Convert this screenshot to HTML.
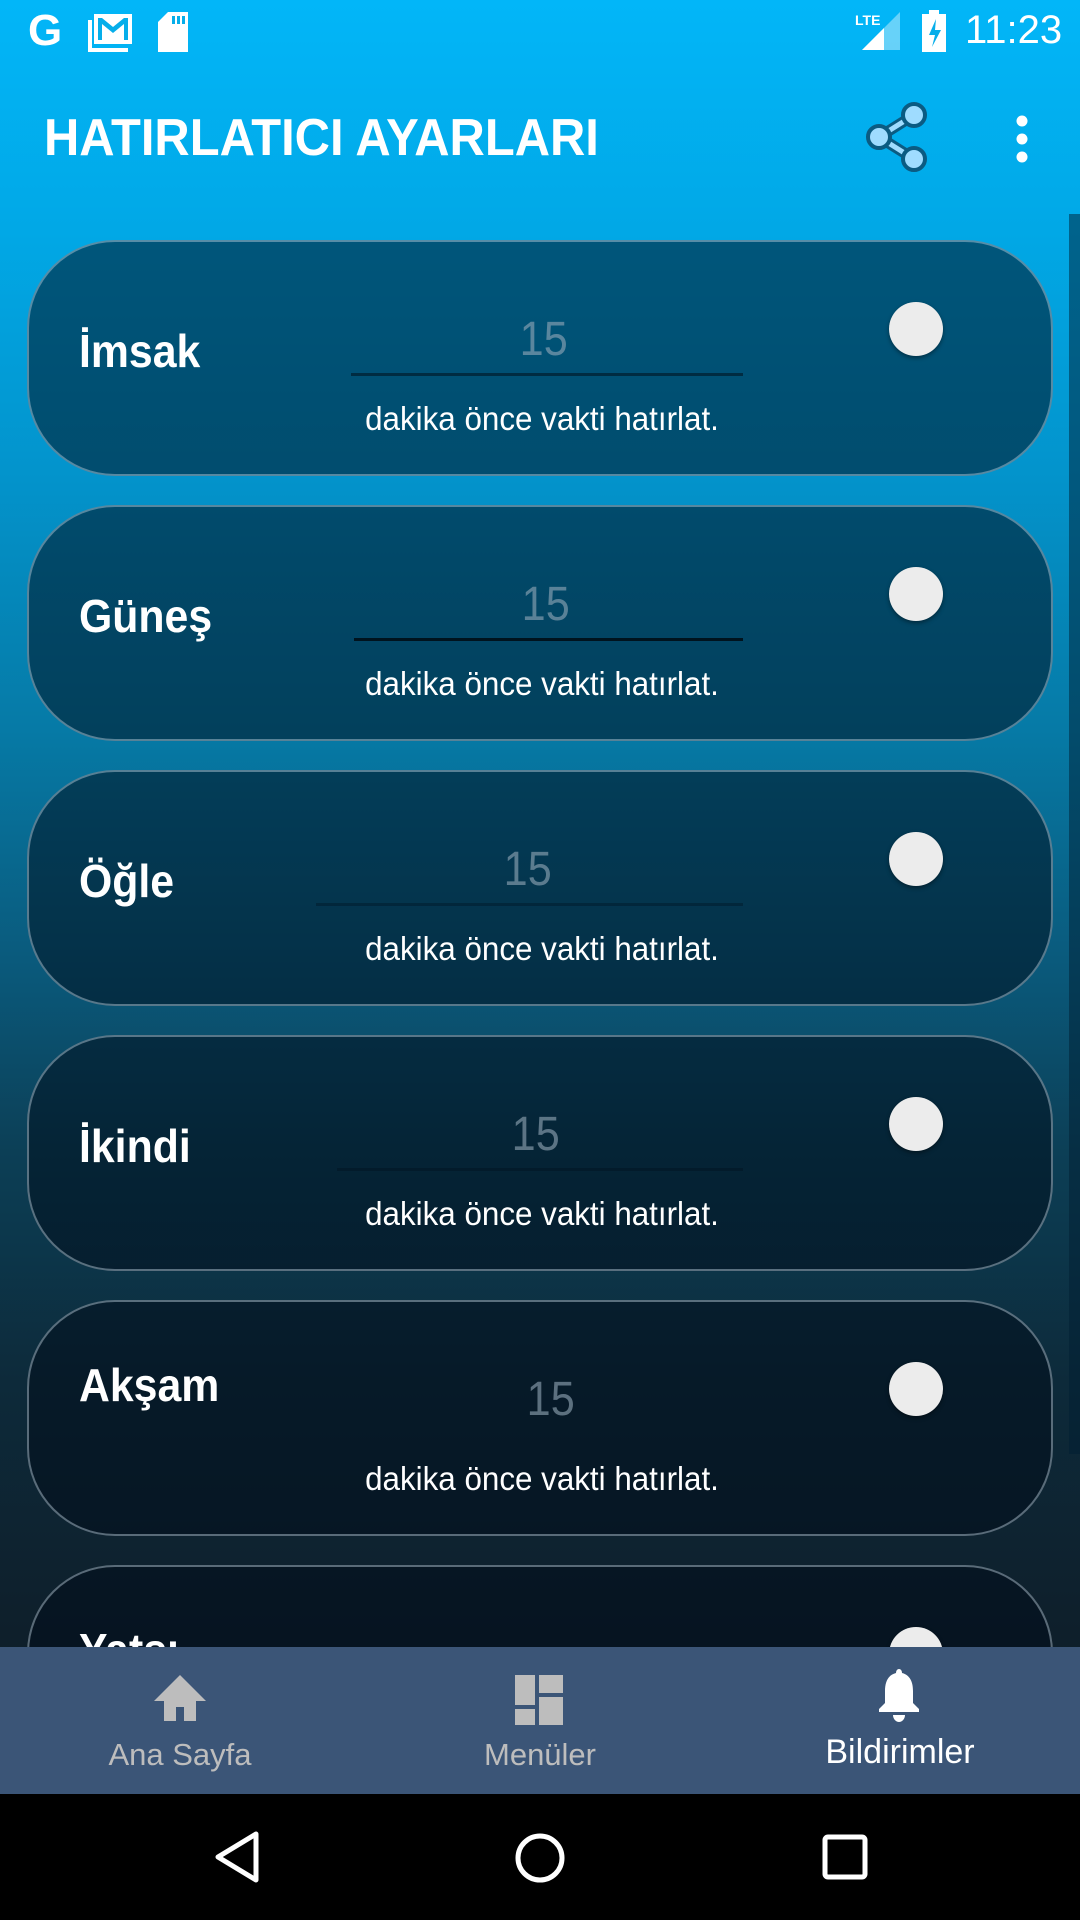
<!DOCTYPE html>
<html><head><meta charset="utf-8"><style>
*{margin:0;padding:0;box-sizing:border-box}
body{width:1080px;height:1920px;overflow:hidden;position:relative;font-family:"Liberation Sans",sans-serif;
background:linear-gradient(180deg,#02b6f8 0%,#01a8e6 12%,#0393cb 25%,#067aa6 38%,#0a5a7c 50%,#0c3f56 60%,#0d2a3a 72%,#0e1f2b 85%,#0e1a24 100%)}
.sb{position:absolute;top:0;left:0;width:1080px;height:63px;color:#fff}
.title{position:absolute;left:44px;top:108px;font-size:52px;font-weight:bold;color:#fff;transform:scaleX(0.94);transform-origin:left;white-space:nowrap}
.card{position:absolute;left:27px;width:1026px;height:236px;border-radius:88px;border:2px solid rgba(190,210,225,0.45);background:rgba(0,12,25,0.52)}
.lbl{position:absolute;left:50px;font-size:46px;font-weight:bold;color:#fff;transform:scaleX(0.93);transform-origin:left}
.num{position:absolute;font-size:48px;color:rgba(150,170,185,0.6);transform:scaleX(0.9)}
.ul{position:absolute;height:3px;background:rgba(0,15,25,0.55)}
.sub{position:absolute;left:0;width:1026px;text-align:center;font-size:33px;color:#fff;top:158px;transform:scaleX(0.95)}
.th{position:absolute;left:860px;width:54px;height:54px;border-radius:50%;background:#ececec;box-shadow:0 2px 4px rgba(0,0,0,0.4)}
.nav{position:absolute;left:0;top:1647px;width:1080px;height:147px;background:#3b5577}
.nl{position:absolute;top:90px;width:360px;text-align:center;font-size:31px;color:#bdbdbd}
.sys{position:absolute;left:0;top:1794px;width:1080px;height:126px;background:#000}
</style></head><body>
<div class="sb">
 <div style="position:absolute;left:28px;top:6px;font-size:44px;font-weight:bold">G</div>
 <svg style="position:absolute;left:88px;top:12px" width="46" height="40" viewBox="0 0 46 40"><rect x="6" y="2" width="38" height="30" fill="#fff"/><path d="M10 6v22h4V12l11 9 11-9v16h4V6h-4L25 15 14 6z" fill="#06aeea"/><path d="M2 8v30h38" stroke="#fff" stroke-width="4" fill="none"/></svg>
 <svg style="position:absolute;left:158px;top:12px" width="32" height="40" viewBox="0 0 32 40"><path d="M10 0h20v40H0V10z" fill="#fff"/><rect x="14" y="4" width="3" height="8" fill="#06aeea"/><rect x="19" y="4" width="3" height="8" fill="#06aeea"/><rect x="24" y="4" width="3" height="8" fill="#06aeea"/></svg>
 <div style="position:absolute;left:855px;top:12px;font-size:14px;font-weight:bold">LTE</div>
 <svg style="position:absolute;left:862px;top:12px" width="38" height="38"><path d="M38 0V38H0z" fill="rgba(255,255,255,0.4)"/><path d="M22 16V38H0z" fill="#fff"/></svg>
 <svg style="position:absolute;left:922px;top:10px" width="24" height="42"><rect x="7" y="0" width="10" height="4" fill="#fff"/><rect x="0" y="4" width="24" height="38" fill="#fff"/><path d="M14 9l-7 16h6l-3 12 9-17h-6z" fill="#06aeea"/></svg>
 <div style="position:absolute;left:965px;top:8px;font-size:40px">11:23</div>
</div>
<div class="title">HATIRLATICI AYARLARI</div>
<svg style="position:absolute;left:862px;top:102px" width="70" height="70" viewBox="0 0 70 70"><g stroke="#0b5b82" stroke-width="4" fill="#9fdcff"><line x1="52" y1="13" x2="17" y2="35" stroke-width="11"/><line x1="17" y1="35" x2="52" y2="57" stroke-width="11"/><line x1="52" y1="13" x2="17" y2="35" stroke="#9fdcff" stroke-width="5"/><line x1="17" y1="35" x2="52" y2="57" stroke="#9fdcff" stroke-width="5"/><circle cx="52" cy="13" r="11"/><circle cx="17" cy="35" r="11"/><circle cx="52" cy="57" r="11"/></g></svg>
<svg style="position:absolute;left:1012px;top:115px" width="20" height="48"><circle cx="10" cy="6" r="5.5" fill="#fff"/><circle cx="10" cy="24" r="5.5" fill="#fff"/><circle cx="10" cy="42" r="5.5" fill="#fff"/></svg>
<div style="position:absolute;left:1069px;top:214px;width:11px;height:1240px;background:rgba(0,30,50,0.5)"></div>

<div class="card" style="top:240px"><div class="lbl" style="top:82px">İmsak</div><div class="num" style="left:488px;top:70px">15</div><div class="ul" style="left:322px;width:392px;top:131px"></div><div class="sub">dakika önce vakti hatırlat.</div><div class="th" style="top:60px"></div></div>
<div class="card" style="top:505px"><div class="lbl" style="top:82px">Güneş</div><div class="num" style="left:490px;top:70px">15</div><div class="ul" style="left:325px;width:389px;top:131px;background:rgba(0,10,18,0.85)"></div><div class="sub">dakika önce vakti hatırlat.</div><div class="th" style="top:60px"></div></div>
<div class="card" style="top:770px"><div class="lbl" style="top:82px">Öğle</div><div class="num" style="left:472px;top:70px">15</div><div class="ul" style="left:287px;width:427px;top:131px;background:rgba(0,15,25,0.35)"></div><div class="sub">dakika önce vakti hatırlat.</div><div class="th" style="top:60px"></div></div>
<div class="card" style="top:1035px"><div class="lbl" style="top:82px">İkindi</div><div class="num" style="left:480px;top:70px">15</div><div class="ul" style="left:308px;width:406px;top:131px;background:rgba(0,15,25,0.35)"></div><div class="sub">dakika önce vakti hatırlat.</div><div class="th" style="top:60px"></div></div>
<div class="card" style="top:1300px"><div class="lbl" style="top:56px">Akşam</div><div class="num" style="left:495px;top:70px">15</div><div class="sub">dakika önce vakti hatırlat.</div><div class="th" style="top:60px"></div></div>
<div class="card" style="top:1565px"><div class="lbl" style="top:56px">Yatsı</div><div class="th" style="top:60px"></div></div>

<div class="nav">
 <svg style="position:absolute;left:152px;top:28px" width="56" height="48" viewBox="0 0 56 48"><path d="M28 0L54 26H44V46H32V32H24V46H12V26H2z" fill="#bdbdbd"/></svg>
 <svg style="position:absolute;left:515px;top:28px" width="48" height="50"><rect x="0" y="0" width="20" height="30" fill="#bdbdbd"/><rect x="0" y="34" width="20" height="16" fill="#bdbdbd"/><rect x="24" y="0" width="24" height="18" fill="#bdbdbd"/><rect x="24" y="22" width="24" height="28" fill="#bdbdbd"/></svg>
 <svg style="position:absolute;left:877px;top:22px" width="44" height="56" viewBox="0 0 44 56"><path d="M22 0c2 0 3 2 3 4 8 2 11 9 11 18v12l6 6v3H2v-3l6-6V22c0-9 3-16 11-18 0-2 1-4 3-4z" fill="#fff"/><path d="M16 46h12c0 4-3 7-6 7s-6-3-6-7z" fill="#fff"/></svg>
 <div class="nl" style="left:0">Ana Sayfa</div>
 <div class="nl" style="left:360px">Menüler</div>
 <div class="nl" style="left:720px;color:#fff;font-size:34px;top:86px">Bildirimler</div>
</div>
<div class="sys">
 <svg style="position:absolute;left:212px;top:36px" width="50" height="54"><path d="M44 4L6 27L44 50Z" fill="none" stroke="#fff" stroke-width="5" stroke-linejoin="round"/></svg>
 <svg style="position:absolute;left:514px;top:38px" width="52" height="52"><circle cx="26" cy="26" r="22" fill="none" stroke="#fff" stroke-width="5"/></svg>
 <svg style="position:absolute;left:822px;top:40px" width="46" height="46"><rect x="3" y="3" width="40" height="40" rx="3" fill="none" stroke="#fff" stroke-width="5"/></svg>
</div>
</body></html>
